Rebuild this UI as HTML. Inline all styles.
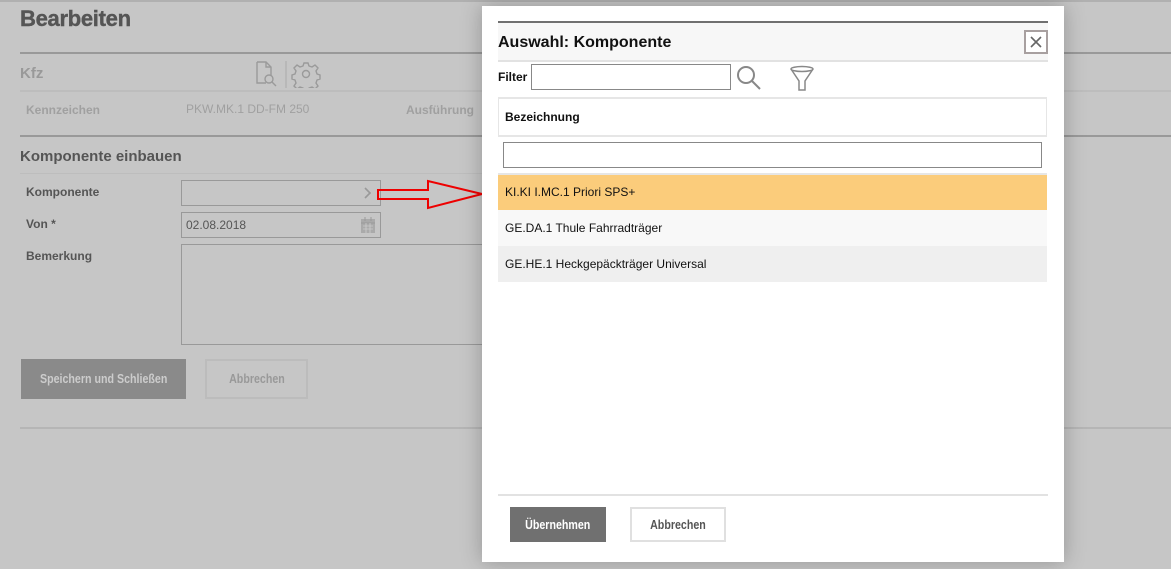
<!DOCTYPE html>
<html><head><meta charset="utf-8"><style>
*{margin:0;padding:0;box-sizing:border-box}
body{width:1171px;height:569px;overflow:hidden;background:#c6c6c6;font-family:"Liberation Sans",Arial,sans-serif;position:relative}
.a{position:absolute}
.t{font-size:12px;color:#555}
.narrow{font-weight:bold;font-size:13px;text-align:center}
.narrow span{display:inline-block;transform:scaleX(.82)}
</style></head><body>
<div class="a" style="left:0;top:0;width:1171px;height:2px;background:#b0b0b0"></div>
<div class="a" style="left:20px;top:6px;font-size:22px;font-weight:900;color:#555;letter-spacing:-0.3px;-webkit-text-stroke:0.4px #555">Bearbeiten</div>
<div class="a" style="left:20px;top:52px;width:1151px;height:2px;background:#999"></div>
<div class="a" style="left:20px;top:65px;font-size:15px;font-weight:bold;color:#999">Kfz</div>
<svg class="a" style="left:254px;top:60px" width="70" height="28" viewBox="0 0 70 28" fill="none" stroke="#9a9a9a" stroke-width="1.4">
<path d="M3 2h9l5 5v9M3 2v21h9"/><path d="M12 2v5h5"/><circle cx="15" cy="19" r="4"/><path d="M18 22l4 4"/>
<path d="M32 1v27" stroke="#aaa" stroke-width="1"/>
<circle cx="52" cy="14" r="3.5"/><path d="M50 3h4l1 3 3 1 3-2 3 3-2 3 1 3 3 1v4l-3 1-1 3 2 3-3 3-3-2-3 1-1 3h-4l-1-3-3-1-3 2-3-3 2-3-1-3-3-1v-4l3-1 1-3-2-3 3-3 3 2 3-1z"/>
</svg>
<div class="a" style="left:20px;top:90px;width:1151px;height:2px;background:#bdbdbd"></div>
<div class="a" style="left:26px;top:103px;font-size:12px;font-weight:bold;color:#a0a0a0">Kennzeichen</div>
<div class="a" style="left:186px;top:102px;font-size:12px;color:#a0a0a0">PKW.MK.1 DD-FM 250</div>
<div class="a" style="left:406px;top:103px;font-size:12px;font-weight:bold;color:#a0a0a0">Ausführung</div>
<div class="a" style="left:20px;top:135px;width:1151px;height:2px;background:#999"></div>
<div class="a" style="left:20px;top:148px;font-size:15px;font-weight:bold;color:#555">Komponente einbauen</div>
<div class="a" style="left:20px;top:173px;width:470px;height:1px;background:#bdbdbd"></div>
<div class="a t" style="left:26px;top:185px;font-weight:bold">Komponente</div>
<div class="a" style="left:181px;top:180px;width:200px;height:26px;border:1px solid #999"></div>
<svg class="a" style="left:362px;top:187px" width="10" height="12"><path d="M3 1l5 5-5 5" fill="none" stroke="#999" stroke-width="1.6"/></svg>
<div class="a t" style="left:26px;top:217px;font-weight:bold">Von *</div>
<div class="a" style="left:181px;top:212px;width:200px;height:26px;border:1px solid #999"></div>
<div class="a" style="left:186px;top:218px;font-size:12px;color:#555">02.08.2018</div>
<svg class="a" style="left:360px;top:216px" width="16" height="18"><rect x="1" y="3" width="14" height="14" fill="#aaa"/><path d="M1 7h14M5 1v4M11 1v4" stroke="#999"/><path d="M3 10h10M3 13h10M6 7v10M10 7v10" stroke="#ccc" stroke-width=".8"/></svg>
<div class="a t" style="left:26px;top:249px;font-weight:bold">Bemerkung</div>
<div class="a" style="left:181px;top:244px;width:310px;height:101px;border:1px solid #999"></div>
<div class="a narrow" style="left:21px;top:359px;width:165px;height:40px;background:#8a8a8a;color:#ccc;line-height:40px"><span>Speichern und Schließen</span></div>
<div class="a narrow" style="left:205px;top:359px;width:103px;height:40px;border:2px solid #bcbcbc;color:#999;line-height:36px"><span>Abbrechen</span></div>
<div class="a" style="left:20px;top:427px;width:1151px;height:2px;background:#b5b5b5"></div>
<svg class="a" style="left:376px;top:178px" width="110" height="34"><path d="M2 12H52V3L106 16L52 30V21H2Z" fill="none" stroke="#e00" stroke-width="2"/></svg>
<!-- modal -->
<div class="a" style="left:482px;top:6px;width:582px;height:556px;background:#fff;box-shadow:0 0 20px rgba(0,0,0,.25)"></div>
<div class="a" style="left:498px;top:21px;width:550px;height:2px;background:#707070"></div>
<div class="a" style="left:498px;top:23px;width:550px;height:37px;background:#f7f7f7"></div>
<div class="a" style="left:498px;top:34px;font-size:16px;font-weight:bold;color:#111">Auswahl: Komponente</div>
<div class="a" style="left:1024px;top:30px;width:24px;height:24px;border:2px solid #a8a0a0;background:#fff"></div>
<svg class="a" style="left:1028px;top:34px" width="16" height="16"><path d="M3 3l10 10M13 3L3 13" stroke="#666" stroke-width="1.6"/></svg>
<div class="a" style="left:498px;top:60px;width:550px;height:2px;background:#e2e2e2"></div>
<div class="a" style="left:498px;top:70px;font-size:12px;font-weight:bold;color:#111">Filter</div>
<div class="a" style="left:531px;top:64px;width:200px;height:26px;border:1px solid #888"></div>
<svg class="a" style="left:735px;top:64px" width="28" height="28" fill="none" stroke="#888" stroke-width="2"><circle cx="11" cy="11" r="8"/><path d="M17 17l8 8"/></svg>
<svg class="a" style="left:789px;top:64px" width="28" height="28" fill="none" stroke="#888" stroke-width="1.5"><ellipse cx="13" cy="5" rx="11" ry="2.5"/><path d="M2 5l8 12v9h6v-9l8-12"/></svg>
<div class="a" style="left:498px;top:97px;width:549px;height:40px;border:1px solid #e6e6e6;border-width:2px 1px 2px 1px"></div>
<div class="a" style="left:505px;top:110px;font-size:12px;font-weight:bold;color:#111">Bezeichnung</div>
<div class="a" style="left:503px;top:142px;width:539px;height:26px;border:1px solid #888"></div>
<div class="a" style="left:498px;top:173px;width:549px;height:2px;background:#e6e6e6"></div>
<div class="a" style="left:498px;top:175px;width:549px;height:35px;background:#fbcc7b"></div>
<div class="a" style="left:505px;top:185px;font-size:12px;color:#111">KI.KI I.MC.1 Priori SPS+</div>
<div class="a" style="left:498px;top:210px;width:549px;height:36px;background:#f8f8f8"></div>
<div class="a" style="left:505px;top:221px;font-size:12px;color:#111">GE.DA.1 Thule Fahrradträger</div>
<div class="a" style="left:498px;top:246px;width:549px;height:36px;background:#efefef"></div>
<div class="a" style="left:505px;top:257px;font-size:12px;color:#111">GE.HE.1 Heckgepäckträger Universal</div>
<div class="a" style="left:498px;top:494px;width:550px;height:2px;background:#e2e2e2"></div>
<div class="a narrow" style="left:510px;top:507px;width:96px;height:35px;background:#707070;color:#fff;line-height:35px"><span>Übernehmen</span></div>
<div class="a narrow" style="left:630px;top:507px;width:96px;height:35px;border:2px solid #e0e0e0;color:#555;line-height:31px"><span>Abbrechen</span></div>
</body></html>
